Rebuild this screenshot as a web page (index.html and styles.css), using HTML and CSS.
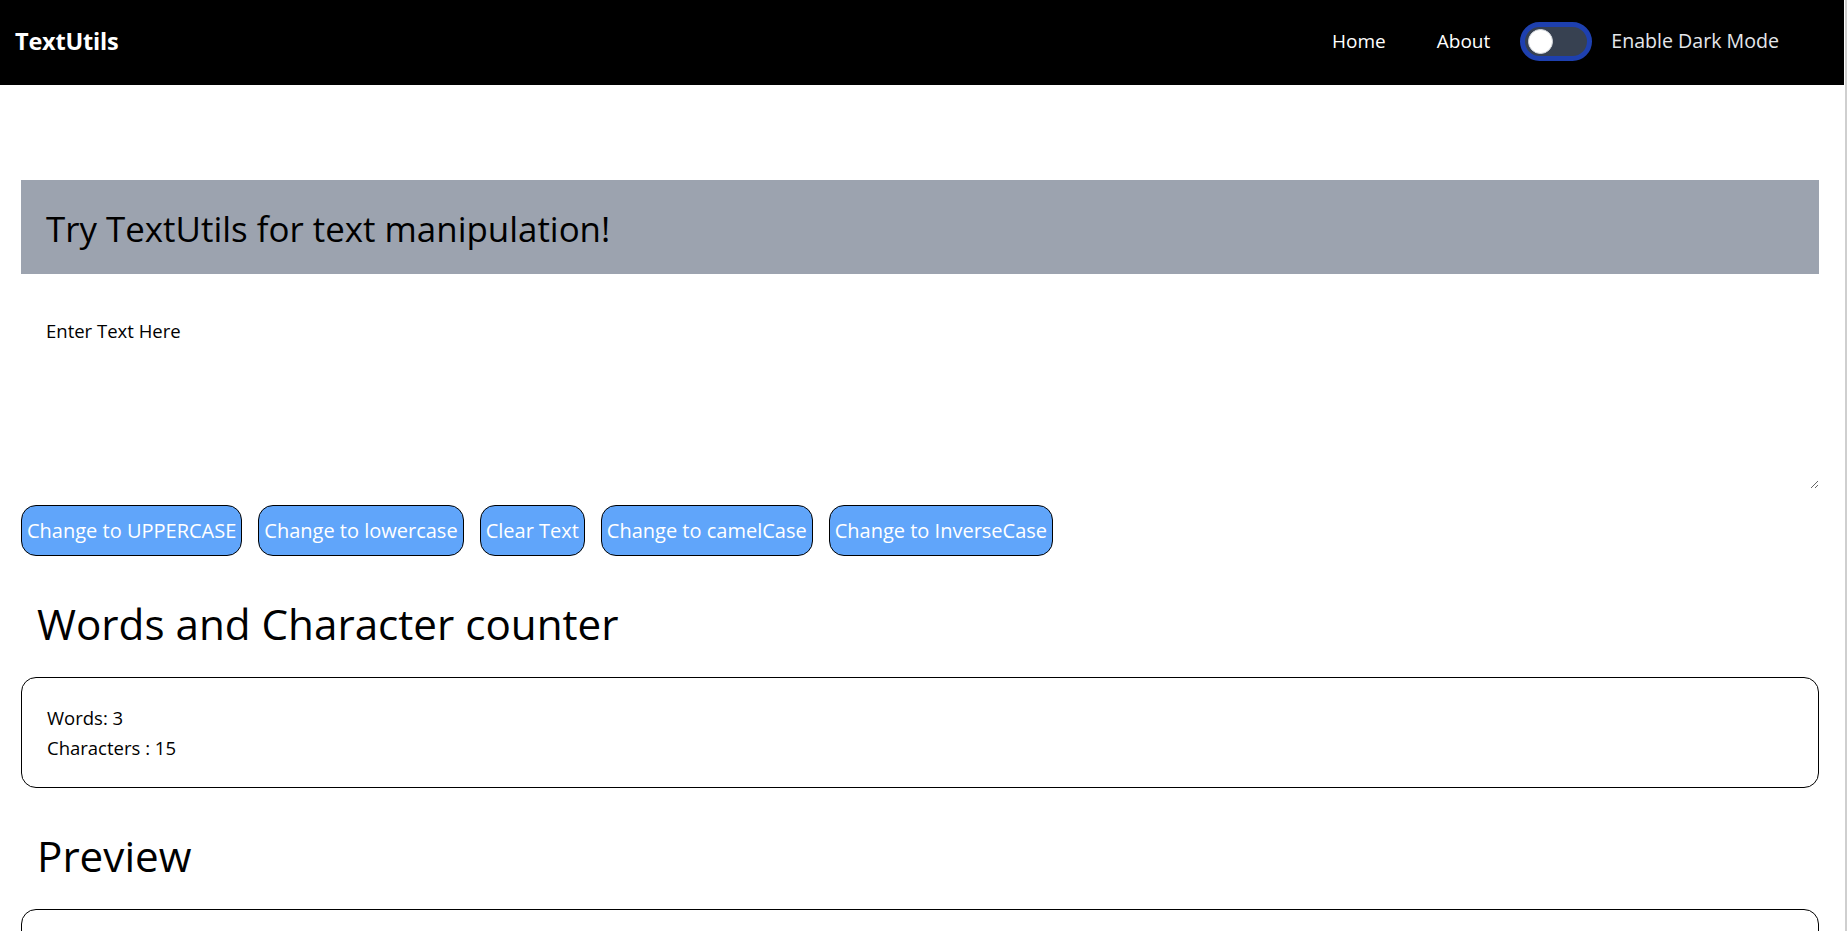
FILE: index.html
```html
<!DOCTYPE html>
<html lang="en">
<head>
<meta charset="utf-8">
<title>TextUtils</title>
<link rel="stylesheet" href="styles.css">
</head>
<body>
<nav class="navbar">
  <a class="brand" href="#">TextUtils</a>
  <div class="nav-right">
    <a class="nav-link" href="#">Home</a>
    <a class="nav-link" href="#">About</a>
    <label class="switch">
      <span class="switch-track"><span class="switch-knob"></span></span>
      <span class="switch-label">Enable Dark Mode</span>
    </label>
  </div>
</nav>

<main class="container">
  <div class="banner">
    <h1 class="banner-title">Try TextUtils for text manipulation!</h1>
  </div>
  <textarea class="text-input">Enter Text Here</textarea>
  <div class="btn-row">
    <button class="btn">Change to UPPERCASE</button>
    <button class="btn">Change to lowercase</button>
    <button class="btn">Clear Text</button>
    <button class="btn">Change to camelCase</button>
    <button class="btn">Change to InverseCase</button>
  </div>

  <h2 class="section-title">Words and Character counter</h2>
  <div class="card">
    <p class="stat">Words: 3</p>
    <p class="stat">Characters : 15</p>
  </div>

  <h2 class="section-title">Preview</h2>
  <div class="card preview">
    <p class="stat">Enter Text Here</p>
  </div>
</main>
<div class="scrollbar"></div>
</body>
</html>
```
FILE: styles.css
```css
html {
  scrollbar-width: none;
}
html::-webkit-scrollbar { display: none; }

* { box-sizing: border-box; }

body {
  margin: 0;
  font-family: "Open Sans", "Noto Sans", sans-serif;
  font-size: 18.5px;
  line-height: 30px;
  color: #000;
  background: #fff;
}

.navbar {
  height: 85px;
  background: #000;
  display: flex;
  align-items: center;
  justify-content: space-between;
  padding: 0 65px 4px 15px;
  margin-right: 3px;
}

.brand {
  color: #fff;
  text-decoration: none;
  font-weight: 700;
  font-size: 23.5px;
  letter-spacing: -0.2px;
}

.nav-right {
  display: flex;
  align-items: center;
}

.nav-link {
  color: #fff;
  text-decoration: none;
  font-size: 19px;
  margin-right: 51px;
}
.nav-link + .nav-link { margin-right: 30px; }

.switch {
  display: flex;
  align-items: center;
  gap: 19px;
  color: #e5e7eb;
  font-size: 19.6px;
}

.switch-track {
  width: 72px;
  height: 39px;
  border-radius: 20px;
  background: #374151;
  border: 5px solid #1e40af;
  display: flex;
  align-items: center;
  padding-left: 3px;
  margin-top: 2px;
}

.switch-knob {
  width: 25px;
  height: 25px;
  border-radius: 50%;
  background: #fff;
  border: 1px solid #d1d5db;
}

.container {
  padding: 95px 28px 0 21px;
}

.banner {
  background: #9ca3af;
  height: 94px;
  display: flex;
  align-items: center;
  padding: 0 25px;
}

.banner-title {
  margin: 0;
  font-weight: 400;
  font-size: 34.9px;
  line-height: 44px;
  padding-top: 4px;
}

.text-input {
  display: block;
  width: 100%;
  height: 194px;
  margin: 21px 0 0;
  padding: 21px 25px;
  border: none;
  outline: none;
  font-family: inherit;
  font-size: 18.5px;
  line-height: 30px;
  color: #000;
  resize: both;
  background: #fff;
}

.btn-row {
  display: flex;
  gap: 16px;
  margin-top: 16px;
}

.btn {
  height: 51px;
  padding: 0 5px;
  background: #60a5fa;
  color: #fff;
  border: 1px solid #000;
  border-radius: 15px;
  font-family: inherit;
  font-size: 20px;
}

.section-title {
  margin: 40px 0 25px;
  padding-left: 16px;
  font-weight: 400;
  font-size: 42.2px;
  line-height: 56px;
}

.card {
  border: 1px solid #000;
  border-radius: 15px;
  padding: 25px 25px 24px;
}

.preview {
  min-height: 111px;
  padding-top: 34px;
}

.stat {
  margin: 0;
}

.scrollbar {
  position: fixed;
  top: 0;
  right: 0;
  width: 3px;
  height: 100%;
  background: #fff;
  border-right: 2px solid #cfcfcf;
}
```
